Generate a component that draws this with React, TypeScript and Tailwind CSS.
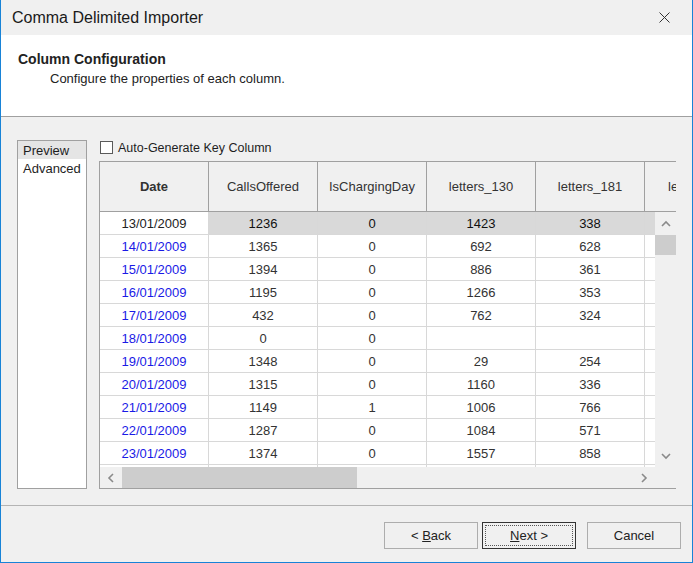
import React from "react";

const rows = [
  ["13/01/2009", "1236", "0", "1423", "338"],
  ["14/01/2009", "1365", "0", "692", "628"],
  ["15/01/2009", "1394", "0", "886", "361"],
  ["16/01/2009", "1195", "0", "1266", "353"],
  ["17/01/2009", "432", "0", "762", "324"],
  ["18/01/2009", "0", "0", "", ""],
  ["19/01/2009", "1348", "0", "29", "254"],
  ["20/01/2009", "1315", "0", "1160", "336"],
  ["21/01/2009", "1149", "1", "1006", "766"],
  ["22/01/2009", "1287", "0", "1084", "571"],
  ["23/01/2009", "1374", "0", "1557", "858"],
  ["", "", "", "", ""],
];

const headers = ["Date", "CallsOffered", "IsChargingDay", "letters_130", "letters_181", "le"];

function Chevron({ dir }: { dir: "up" | "down" | "left" | "right" }) {
  const d = {
    up: "M1 6 L5 2 L9 6",
    down: "M1 2 L5 6 L9 2",
    left: "M6 1 L2 5 L6 9",
    right: "M2 1 L6 5 L2 9",
  }[dir];
  const w = dir === "up" || dir === "down" ? 10 : 8;
  const h = dir === "up" || dir === "down" ? 8 : 10;
  return (
    <svg width={w} height={h} viewBox={`0 0 ${w} ${h}`} fill="none">
      <path d={d} stroke="#8a8a8a" strokeWidth="1.6" />
    </svg>
  );
}

export default function App() {
  return (
    <div className="w-[693px] h-[563px] bg-[#f0f0f0] border border-t-0 border-[#1883d7] flex flex-col text-[#1e1e1e] font-['Liberation_Sans',Arial,sans-serif] overflow-hidden">
      {/* title bar */}
      <div className="h-[35px] shrink-0 flex items-center justify-between pl-[11px] pr-[22px] bg-[#f0f0f0]">
        <span className="text-[16px] text-[#1a1a1a]">Comma Delimited Importer</span>
        <svg width="11" height="11" viewBox="0 0 11 11">
          <path d="M0.5 0.5 L10.5 10.5 M10.5 0.5 L0.5 10.5" stroke="#333" strokeWidth="1" />
        </svg>
      </div>

      {/* header */}
      <div className="h-[82px] shrink-0 bg-white border-b border-[#a0a0a0] pl-[17px] pt-[16px]">
        <div className="text-[14px] font-bold text-[#222] leading-[16px]">Column Configuration</div>
        <div className="text-[13px] text-[#222] pl-[32px] mt-[4px] leading-[15px]">Configure the properties of each column.</div>
      </div>

      {/* body */}
      <div className="flex-1 flex pl-[16px] pr-[16px] pt-[23px] gap-[12px] border-b border-[#b4b4b4]">
        <div className="w-[70px] h-[349px] bg-white border border-[#a0a0a0] text-[13px]">
          <div className="h-[18px] bg-[#e5e5e5] pl-[5px] leading-[19px]">Preview</div>
          <div className="h-[18px] pl-[5px] leading-[19px]">Advanced</div>
        </div>

        <div className="flex-1 flex flex-col">
          <div className="h-[21px] flex items-start gap-[5px] pl-[1px] pt-[1px]">
            <div className="w-[13px] h-[13px] bg-white border border-[#5a5a5a]" />
            <span className="text-[12.5px] leading-[14px]">Auto-Generate Key Column</span>
          </div>

          <div className="w-[577px] h-[328px] border-l border-t border-b border-[#a0a0a0] flex flex-col overflow-hidden">
            {/* column headers */}
            <div className="h-[50px] shrink-0 flex border-b border-[#a0a0a0] bg-[#f0f0f0] overflow-hidden">
              {headers.map((h, i) => (
                <div
                  key={h}
                  className={`w-[109px] shrink-0 flex items-center border-r border-[#a0a0a0] text-[13px] text-[#333] ${
                    i === 0 ? "font-bold justify-center" : i === 5 ? "justify-start pl-[23px]" : "justify-center"
                  }`}
                >
                  {h}
                </div>
              ))}
            </div>

            {/* rows + vertical scrollbar */}
            <div className="h-[255px] shrink-0 flex">
              <div className="w-[555px] overflow-hidden bg-white">
                {rows.map((r, ri) => (
                  <div key={ri} className={`h-[23px] flex ${ri === 0 ? "bg-[#d9d9d9]" : ""}`}>
                    {r.map((c, ci) => (
                      <div
                        key={ci}
                        className={`w-[109px] shrink-0 flex items-center justify-center pt-[1px] border-r border-b border-[#d8d8d8] text-[13px] ${
                          ci === 0
                            ? ri === 0
                              ? "bg-white text-[#222]"
                              : "text-[#1a1ae6]"
                            : ri === 0
                            ? "text-[#111]"
                            : "text-[#333]"
                        }`}
                      >
                        {c}
                      </div>
                    ))}
                    <div className="w-[109px] shrink-0 border-b border-[#d8d8d8]" />
                  </div>
                ))}
              </div>
              <div className="w-[21px] shrink-0 flex flex-col bg-[#f0f0f0]">
                <div className="h-[23px] flex items-center justify-center">
                  <Chevron dir="up" />
                </div>
                <div className="h-[20px] bg-[#cdcdcd]" />
                <div className="flex-1" />
                <div className="h-[23px] flex items-center justify-center">
                  <Chevron dir="down" />
                </div>
              </div>
            </div>

            {/* horizontal scrollbar */}
            <div className="flex-1 flex">
              <div className="w-[555px] flex bg-[#f0f0f0]">
                <div className="w-[22px] flex items-center justify-center">
                  <Chevron dir="left" />
                </div>
                <div className="w-[235px] bg-[#cdcdcd]" />
                <div className="flex-1" />
                <div className="w-[22px] flex items-center justify-center">
                  <Chevron dir="right" />
                </div>
              </div>
            </div>
          </div>
        </div>
      </div>

      {/* footer */}
      <div className="h-[56px] shrink-0 flex items-start justify-end pt-[16px] pr-[11px]">
        <button className="w-[94px] h-[27px] bg-[#f0f0f0] border border-[#adadad] text-[13px] text-[#222] pt-[1px]">
          &lt; <span className="underline">B</span>ack
        </button>
        <button className="ml-[4px] w-[94px] h-[27px] bg-[#f0f0f0] border border-[#333] text-[13px] text-[#222] p-[2px]">
          <span className="flex w-full h-full items-center justify-center pt-[1px] border border-dotted border-[#555]">
            <span className="underline">N</span>ext &gt;
          </span>
        </button>
        <button className="ml-[11px] w-[94px] h-[27px] bg-[#f0f0f0] border border-[#adadad] text-[13px] text-[#222] pt-[1px]">
          Cancel
        </button>
      </div>
    </div>
  );
}
